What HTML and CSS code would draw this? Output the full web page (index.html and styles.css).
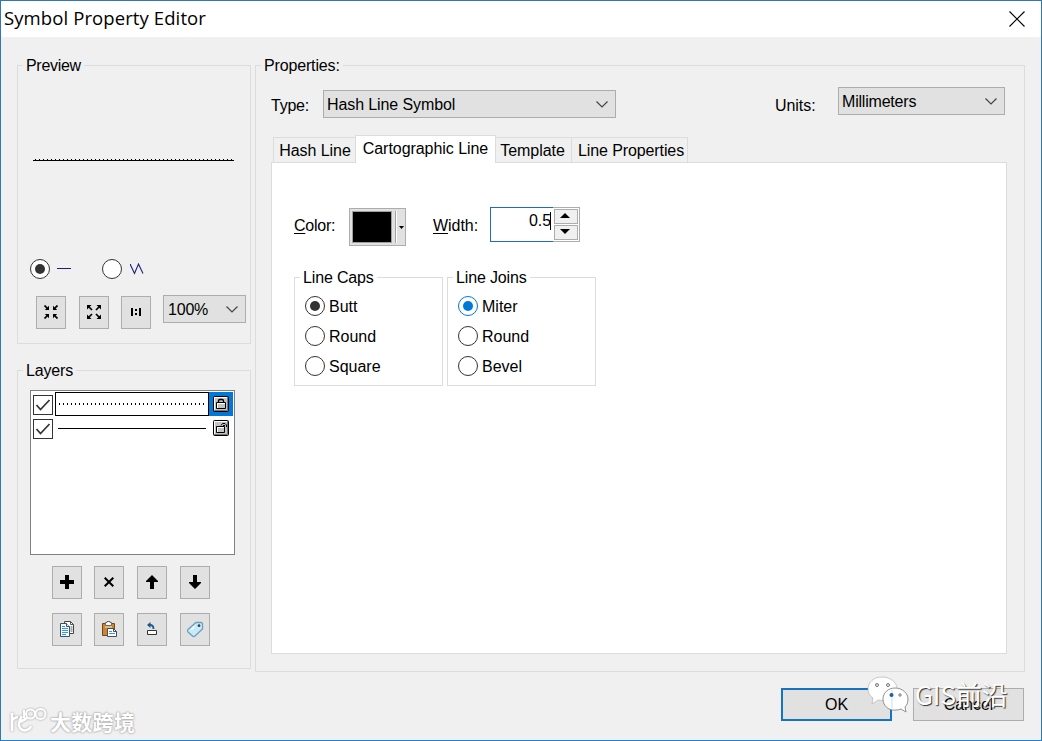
FILE: index.html
```html
<!DOCTYPE html>
<html lang="en">
<head>
    <meta charset="UTF-8">
    <meta name="viewport" content="width=device-width, initial-scale=1.0">
    <title>Symbol Property Editor</title>
    <link rel="stylesheet" href="styles.css">
</head>
<body>
    <div class="dialog">
        <div class="titlebar">
            <h1 class="title">Symbol Property Editor</h1>
            <svg class="close" width="16" height="16" viewBox="0 0 16 16"><path d="M.5.5l15 15M15.5.5l-15 15" stroke="#000" stroke-width="1.1"/></svg>
        </div>

        <div class="main">
            <div class="sidebar">
                <div class="group preview">
                    <span class="legend">Preview</span>
                    <svg class="preview-line" width="201" height="3" viewBox="0 0 201 3">
                        <path d="M2 1.5h199" stroke="#000" stroke-dasharray="1 3"/>
                        <path d="M0 2.5h201" stroke="#000"/>
                    </svg>
                    <div class="preview-modes">
                        <span class="radio checked"></span>
                        <svg class="mode-line" width="15" height="20" viewBox="0 0 15 20"><path d="M0 9.5h14" stroke="#1c1a80"/></svg>
                        <span class="radio"></span>
                        <svg width="14" height="20" viewBox="0 0 14 20"><path d="M.5 5v1l4 8.500L8.500 5l4.500 9.500" fill="none" stroke="#1c1a80" stroke-width="1.100"/></svg>
                    </div>
                    <div class="preview-tools">
                        <span class="btn">
                            <svg width="14" height="14" viewBox="0 0 14 14"><path d="M.5.5l4 4M13.500.5l-4 4M.5 13.500l4-4M13.500 13.500l-4-4" stroke="#000" stroke-width="1.700"/><path d="M5 .8V5H.8zM9 .8V5h4.200zM5 13.200V9H.8zM9 13.200V9h4.200z"/></svg>
                        </span>
                        <span class="btn tool-out">
                            <svg width="14" height="14" viewBox="0 0 14 14"><path d="M1 1l4 4M13 1L9 5M1 13l4-4M13 13L9 9" stroke="#000" stroke-width="1.700"/><path d="M0 0h4.500L0 4.500zM14 0H9.500L14 4.500zM0 14h4.500L0 9.500zM14 14H9.500L14 9.500z"/></svg>
                        </span>
                        <span class="btn tool-fit">
                            <svg width="10" height="8" viewBox="0 0 10 8"><path d="M0 0h2v8H0zM4 1h2v2H4zM4 5h2v2H4zM8 0h2v8H8z"/></svg>
                        </span>
                        <span class="combo zoom">100%<svg class="chevron" width="12" height="7" viewBox="0 0 12 7"><path d="M.5.5L6 6 11.500.5"/></svg></span>
                    </div>
                </div>

                <div class="group layers">
                    <span class="legend">Layers</span>
                    <div class="layer-list">
                        <div class="layer selected">
                            <span class="check"><svg width="18" height="18" viewBox="0 0 18 18"><path d="M2.500 9l4 4.500L15.500 4" fill="none" stroke="#333" stroke-width="1.700"/></svg></span>
                            <span class="sample"><svg width="148" height="4" viewBox="0 0 148 4"><path d="M1 2h147" stroke="#000" stroke-width="2" stroke-dasharray="1 3"/></svg></span>
                            <span class="lock">
                                <svg width="16" height="16" viewBox="0 0 16 16"><rect x=".5" y=".5" width="15" height="15" rx="1" fill="#c3c3c3" stroke="#000"/><path d="M1.500 14V1.500H14" stroke="#fff" fill="none"/><path d="M14.500 1v13.500H1" stroke="#777" fill="none"/><path d="M5.500 7V5q0-1.500 1.500-1.500h2q1.500 0 1.500 1.500v2" fill="none" stroke="#000" stroke-width="1.400"/><path d="M3.500 6.500h9v6h-9z" fill="#c3c3c3" stroke="#000"/><path d="M4.500 12V7.500H12" stroke="#fff" fill="none"/></svg>
                            </span>
                        </div>
                        <div class="layer">
                            <span class="check"><svg width="18" height="18" viewBox="0 0 18 18"><path d="M2.500 9l4 4.500L15.500 4" fill="none" stroke="#333" stroke-width="1.700"/></svg></span>
                            <span class="sample"><svg width="148" height="4" viewBox="0 0 148 4"><path d="M0 2.500h148" stroke="#000"/></svg></span>
                            <span class="lock">
                                <svg width="16" height="16" viewBox="0 0 16 16"><rect x=".5" y=".5" width="15" height="15" rx="1" fill="#c3c3c3" stroke="#000"/><path d="M1.500 14V1.500H14" stroke="#fff" fill="none"/><path d="M14.500 1v13.500H1" stroke="#777" fill="none"/><path d="M3.500 6.500h8v6h-8z" fill="#c3c3c3" stroke="#000"/><path d="M4.500 12V7.500H11" stroke="#fff" fill="none"/><path d="M8 5.500l1.500-2h2.500l1.500 1.500v2M10 6l1-1 1 1" fill="none" stroke="#000"/></svg>
                            </span>
                        </div>
                    </div>
                    <div class="layer-tools">
                        <span class="btn"><svg width="14" height="14" viewBox="0 0 14 14"><path d="M5 0h4v5h5v4H9v5H5V9H0V5h5z"/></svg></span>
                        <span class="btn"><svg width="10" height="10" viewBox="0 0 10 10"><path d="M.7.700l8.600 8.600M9.300.700L.7 9.300" stroke="#000" stroke-width="2"/></svg></span>
                        <span class="btn"><svg width="12" height="14" viewBox="0 0 12 14"><path d="M6 0l6 6v1H8v7H4V7H0V6z"/></svg></span>
                        <span class="btn"><svg width="12" height="14" viewBox="0 0 12 14"><path d="M6 14l6-6V7H8V0H4v7H0v1z"/></svg></span>
                        <span class="btn">
                            <svg width="16" height="16" viewBox="0 0 16 16"><path d="M5.500.5h6l3 3v9h-9z" fill="#fff" stroke="#444"/><path d="M11.500.5v3h3M11.500 6h2M11.500 8h2M11.500 10h2" fill="none" stroke="#555"/><path d="M1.500 2.500h6l3 3v10h-9z" fill="#eef8ff" stroke="#35536f"/><path d="M7.500 2.500v3h3" fill="#fff" stroke="#35536f"/><path d="M3 5.500h3M3 7.500h6M3 9.500h6M3 11.500h6M3 13.500h4" stroke="#4593cc"/></svg>
                        </span>
                        <span class="btn">
                            <svg width="16" height="16" viewBox="0 0 16 16"><path d="M1.500 2.500h12v12h-12z" fill="#cc842d" stroke="#70481d"/><path d="M4 3h7v4H4z" fill="#e9ba72"/><path d="M4.500 1.500H6V.5h3v1h1.500v3h-6z" fill="#fff" stroke="#666"/><path d="M6.500 7.500h6l3 3v5h-9z" fill="#fff" stroke="#444c60"/><path d="M12.500 7.500v3h3" fill="none" stroke="#444c60"/><path d="M8 10.500h3M8 12.500h6" stroke="#4593cc"/></svg>
                        </span>
                        <span class="btn">
                            <svg width="14" height="16" viewBox="0 0 14 16"><path d="M5 4q3.500 0 3.500 4" fill="none" stroke="#1f568f" stroke-width="1.800"/><path d="M5.500 1v6L2 4z" fill="#1f568f"/><path d="M2.500 9.500h9v4h-9z" fill="#fffef2" stroke="#333"/></svg>
                        </span>
                        <span class="btn">
                            <svg width="18" height="17" viewBox="0 0 18 17"><path d="M10 1.500h5.500l1 1V8l-7.500 7q-1.500 1-2.500 0l-4.500-4q-1-1 0-2.500z" fill="#c5eafa" stroke="#719db6" stroke-width="1.300"/><path d="M9.500 3.500L4 9l3.500-1z" fill="#fff"/><circle cx="13" cy="4.700" r="1.400" fill="#334855"/></svg>
                        </span>
                    </div>
                </div>
            </div>

            <div class="group properties">
                <span class="legend">Properties:</span>
                <div class="type-row">
                    <span class="type-label">Type:</span>
                    <span class="combo type">Hash Line Symbol<svg class="chevron" width="12" height="7" viewBox="0 0 12 7"><path d="M.5.5L6 6 11.500.5"/></svg></span>
                    <span class="units-label">Units:</span>
                    <span class="combo units">Millimeters<svg class="chevron" width="12" height="7" viewBox="0 0 12 7"><path d="M.5.5L6 6 11.500.5"/></svg></span>
                </div>

                <div class="tabs">
                    <span class="tab tab-hash">Hash Line</span>
                    <span class="tab active">Cartographic Line</span>
                    <span class="tab tab-template">Template</span>
                    <span class="tab tab-line">Line Properties</span>
                </div>

                <div class="panel">
                    <div class="stroke-row">
                        <span class="color-label"><u>C</u>olor:</span>
                        <span class="color-picker">
                            <span class="swatch"></span>
                            <span class="divider"></span>
                            <svg width="5" height="3" viewBox="0 0 5 3"><path d="M0 0h5L2.500 3z"/></svg>
                        </span>
                        <span class="width-label"><u>W</u>idth:</span>
                        <span class="number">
                            <span class="value">0.5</span>
                            <span class="spinner">
                                <span class="spin"><svg width="10" height="5" viewBox="0 0 10 5"><path d="M5 0l5 5H0z"/></svg></span>
                                <span class="spin"><svg width="10" height="5" viewBox="0 0 10 5"><path d="M5 5l5-5H0z"/></svg></span>
                            </span>
                        </span>
                    </div>
                    <div class="options">
                        <div class="group option-group">
                            <span class="legend">Line Caps</span>
                            <div class="option"><span class="radio checked"></span><span>Butt</span></div>
                            <div class="option"><span class="radio"></span><span>Round</span></div>
                            <div class="option"><span class="radio"></span><span>Square</span></div>
                        </div>
                        <div class="group option-group">
                            <span class="legend">Line Joins</span>
                            <div class="option"><span class="radio checked hot"></span><span>Miter</span></div>
                            <div class="option"><span class="radio"></span><span>Round</span></div>
                            <div class="option"><span class="radio"></span><span>Bevel</span></div>
                        </div>
                    </div>
                </div>
            </div>
        </div>

        <div class="footer">
            <span class="action default">OK</span>
            <span class="action">Cancel</span>
        </div>

        <!-- watermarks over the dialog -->
        <div class="mark mark-left">
            <svg width="40" height="28" viewBox="0 0 40 28">
                <g fill="none" stroke="#fff" stroke-width="2.600"><path d="M4 6v18M4 14q1-3 6-4M14 9q-5 8-2 12 4 5 10 0l1-2M12 15l7-4"/><path d="M16 3v8" stroke-width="2"/><circle cx="22.500" cy="7" r="4.500" stroke-width="2"/><circle cx="32.500" cy="7" r="5" stroke-width="2"/></g>
            </svg>
            <span>大数跨境</span>
        </div>
        <div class="mark mark-right">
            <svg width="42" height="38" viewBox="0 0 42 38">
                <path d="M15 1C7 1 1 6 1 13c0 4 2 7 5 9l-1 6 6-4q4 1 9 0c6-2 10-6 10-11C30 6 23 1 15 1z" fill="#fff" stroke="#aaa" stroke-width=".6"/>
                <path d="M28 12c-7 0-12 5-12 11 0 7 6 12 13 11q3 0 5-1l5 3-1-5c2-2 3-5 3-8 0-6-6-11-13-11z" fill="#fff" stroke="#777" stroke-width=".8"/>
                <path d="M25 14v18" stroke="#e3eef8" stroke-width="2"/>
                <g fill="#eee" stroke="#777"><circle cx="10" cy="9" r="1.500"/><circle cx="21" cy="9" r="1.500"/><circle cx="33" cy="19" r="1.200"/></g>
                <circle cx="24.500" cy="19" r="2" fill="#1d5f9d"/>
            </svg>
            <span>GIS前沿</span>
        </div>
    </div>
</body>
</html>
```
FILE: styles.css
```css
* {
    margin: 0;
    padding: 0;
    box-sizing: border-box;
}

body {
    font-family: "Liberation Sans", Arial, "Noto Sans CJK SC", sans-serif;
    font-size: 16px;
    line-height: 18px;
    letter-spacing: -0.05px;
    color: #000;
    overflow: hidden;
}

svg {
    display: block;
    flex-shrink: 0;
}

.dialog {
    position: relative;
    width: 1042px;
    height: 741px;
    background: #f0f0f0;
    border: 1px solid #2f78b4;
    border-bottom-color: #1883d7;
}

.titlebar {
    display: flex;
    justify-content: space-between;
    align-items: center;
    height: 36px;
    padding: 0 16px 0 3px;
    background: #fff;
}

.close {
    margin-top: -1px;
}

.title {
    margin-top: -2px;
    font-family: "Open Sans", "Noto Sans", sans-serif;
    font-size: 18.5px;
    font-weight: 400;
    line-height: 24px;
    letter-spacing: 0.1px;
}

.main {
    display: flex;
    gap: 4px;
    padding: 28px 16px 0;
}

.sidebar {
    display: flex;
    flex-direction: column;
    gap: 26px;
    width: 234px;
}

/* Group boxes */
.group {
    border: 1px solid #dcdcdc;
}

.legend {
    display: block;
    width: fit-content;
    height: 18px;
    margin: -10px 0 0 5px;
    padding: 1px 3px 0;
    background: #f0f0f0;
    letter-spacing: -0.15px;
    white-space: nowrap;
}

.preview {
    height: 279px;
}

.preview .legend {
    letter-spacing: -0.3px;
}

.layers {
    height: 299px;
}

.properties {
    width: 770px;
    height: 607px;
}

/* Common controls */
.btn {
    display: flex;
    justify-content: center;
    align-items: center;
    width: 30px;
    height: 33px;
    padding-bottom: 1px;
    background: #e1e1e1;
    border: 1px solid #adadad;
}

.combo {
    display: flex;
    justify-content: space-between;
    align-items: center;
    height: 28px;
    padding: 1px 7px 0 3px;
    background: #e1e1e1;
    border: 1px solid #adadad;
}

.chevron {
    margin-top: -1px;
    fill: none;
    stroke: #444;
    stroke-width: 1.2;
}

.radio {
    display: flex;
    justify-content: center;
    align-items: center;
    flex-shrink: 0;
    width: 20px;
    height: 20px;
    background: #fff;
    border: 1px solid #333;
    border-radius: 50%;
}

.radio.checked::after {
    content: "";
    width: 10px;
    height: 10px;
    background: #333;
    border-radius: 50%;
}

.radio.hot {
    border-color: #0078d7;
}

.radio.hot::after {
    background: #0078d7;
}

/* Preview */
.preview-line {
    margin: 84px 0 0 15px;
}

.preview-modes {
    display: flex;
    margin: 98px 0 0 12px;
}

.mode-line {
    margin: 0 30px 0 7px;
}

.preview-modes .radio + svg:last-child {
    margin-left: 8px;
}

.preview-tools {
    display: flex;
    align-items: flex-start;
    margin: 16px 0 0 18px;
}

.preview-tools .btn {
    margin-top: 1px;
}

.preview-tools .tool-out {
    margin-left: 13px;
}

.preview-tools .tool-fit {
    margin-left: 12px;
}

.zoom {
    width: 83px;
    margin-left: 12px;
    padding-left: 4px;
    letter-spacing: -0.2px;
}

/* Layers */
.layer-list {
    width: 205px;
    height: 165px;
    margin: 11px 0 0 12px;
    padding: 1px;
    background: #fff;
    border: 1px solid #7f8189;
}

.layer {
    display: flex;
    height: 24px;
}

.check {
    width: 20px;
    height: 20px;
    margin: 3px 2px 0 1px;
    border: 1px solid #333;
}

.sample {
    display: flex;
    justify-content: center;
    align-items: center;
    width: 154px;
    height: 24px;
    border: 1px solid transparent;
}

.selected .sample {
    border-color: #000;
}

.lock {
    display: flex;
    justify-content: center;
    align-items: center;
    width: 24px;
    height: 24px;
}

.selected .lock {
    background: #0078d7;
}

.layer-tools {
    display: grid;
    grid-template-columns: 42px 43px 43px 30px;
    row-gap: 14px;
    margin: 11px 0 0 34px;
}

/* Properties */
.type-row {
    display: flex;
    align-items: flex-start;
    margin-top: 13px;
    padding-left: 15px;
}

.type-label {
    width: 52px;
    margin-top: 10px;
    letter-spacing: -0.25px;
}

.type {
    width: 293px;
    margin-top: 3px;
    letter-spacing: -0.1px;
}

.units-label {
    width: 63px;
    margin: 10px 0 0 159px;
}

.units {
    width: 167px;
    letter-spacing: -0.2px;
}

.tabs {
    display: flex;
    align-items: flex-end;
    height: 28px;
    margin: 17px 0 -1px 17px;
}

.tab {
    height: 26px;
    padding-top: 4px;
    text-align: center;
    white-space: nowrap;
    border: 1px solid #dcdcdc;
    border-left: none;
}

.tab-hash {
    width: 83px;
    border-left: 1px solid #dcdcdc;
    border-right: none;
}

.tab.active {
    position: relative;
    width: 141px;
    height: 28px;
    margin-left: -1px;
    background: #fff;
    border-left: 1px solid #dcdcdc;
    border-bottom: none;
}

.tab-template {
    width: 76px;
    padding-right: 2px;
}

.tab-line {
    width: 116px;
    padding-left: 3px;
    letter-spacing: -0.1px;
}

.panel {
    width: 736px;
    height: 492px;
    margin-left: 15px;
    padding: 44px 0 0 22px;
    background: #fff;
    border: 1px solid #dcdcdc;
}

.panel .legend {
    background: #fff;
}

.stroke-row {
    display: flex;
    align-items: flex-start;
}

.stroke-row u {
    text-underline-offset: 2px;
}

.color-label {
    width: 55px;
    margin-top: 10px;
    letter-spacing: -0.25px;
}

.color-picker {
    display: flex;
    align-items: center;
    width: 57px;
    height: 38px;
    margin-top: 1px;
    padding-left: 2px;
    background: #e1e1e1;
    border: 1px solid #adadad;
}

.swatch {
    width: 40px;
    height: 32px;
    background: #000;
    border: 1px solid #a0a0a0;
}

.divider {
    width: 2px;
    height: 32px;
    margin: 0 2px 0 3px;
    background: #fff;
    border-left: 1px solid #a0a0a0;
}

.width-label {
    width: 57px;
    margin: 10px 0 0 27px;
}

.number {
    display: flex;
    width: 90px;
    height: 35px;
}

.value {
    width: 63px;
    padding: 4px 2px 0 0;
    text-align: right;
    border: 1px solid #1a6fb5;
    border-right: none;
}

/* Text caret */
.value::after {
    content: "";
    display: inline-block;
    width: 1px;
    height: 18px;
    margin-left: -1px;
    background: #000;
    vertical-align: -4px;
}

.spinner {
    display: flex;
    flex-direction: column;
    gap: 1px;
    width: 27px;
    padding: 1px;
    border: 1px solid #adadad;
    border-left: none;
}

.spin {
    display: flex;
    flex: 1;
    justify-content: center;
    align-items: center;
    padding: 0 2px 2px 0;
    background: #f0f0f0;
    border: 1px solid #adadad;
}

.options {
    display: flex;
    gap: 4px;
    margin-top: 31px;
}

.option-group {
    width: 149px;
    height: 109px;
}

.option-group .legend {
    margin-bottom: 10px;
}

.option {
    display: flex;
    gap: 4px;
    height: 20px;
    margin: 0 0 10px 10px;
    line-height: 22px;
    letter-spacing: 0;
}

/* Dialog buttons */
.footer {
    display: flex;
    justify-content: flex-end;
    gap: 21px;
    padding: 16px 17px 0 0;
}

.action {
    display: flex;
    justify-content: center;
    align-items: center;
    width: 111px;
    height: 33px;
    background: #e1e1e1;
    border: 1px solid #adadad;
}

.action.default {
    border: 2px solid #1474bf;
}

.mark {
    position: absolute;
    display: flex;
    align-items: center;
    color: #fff;
    white-space: nowrap;
}

.mark-left {
    left: 7px;
    top: 706px;
    gap: 2px;
    font-family: "Noto Sans CJK SC", sans-serif;
    font-size: 21px;
    font-weight: 700;
    line-height: 28px;
    letter-spacing: 0.3px;
    text-shadow: 0 0 2px #999, 0 0 2px #aaa;
}

.mark-left svg {
    filter: drop-shadow(0 0 1px #999);
}

.mark-right {
    left: 866px;
    top: 675px;
    gap: 6px;
    font-family: "Noto Sans CJK SC", sans-serif;
    font-size: 26px;
    line-height: 32px;
    text-shadow: 1px 1px 1px #333;
}

.mark-right span {
    margin-top: -3px;
}
```
